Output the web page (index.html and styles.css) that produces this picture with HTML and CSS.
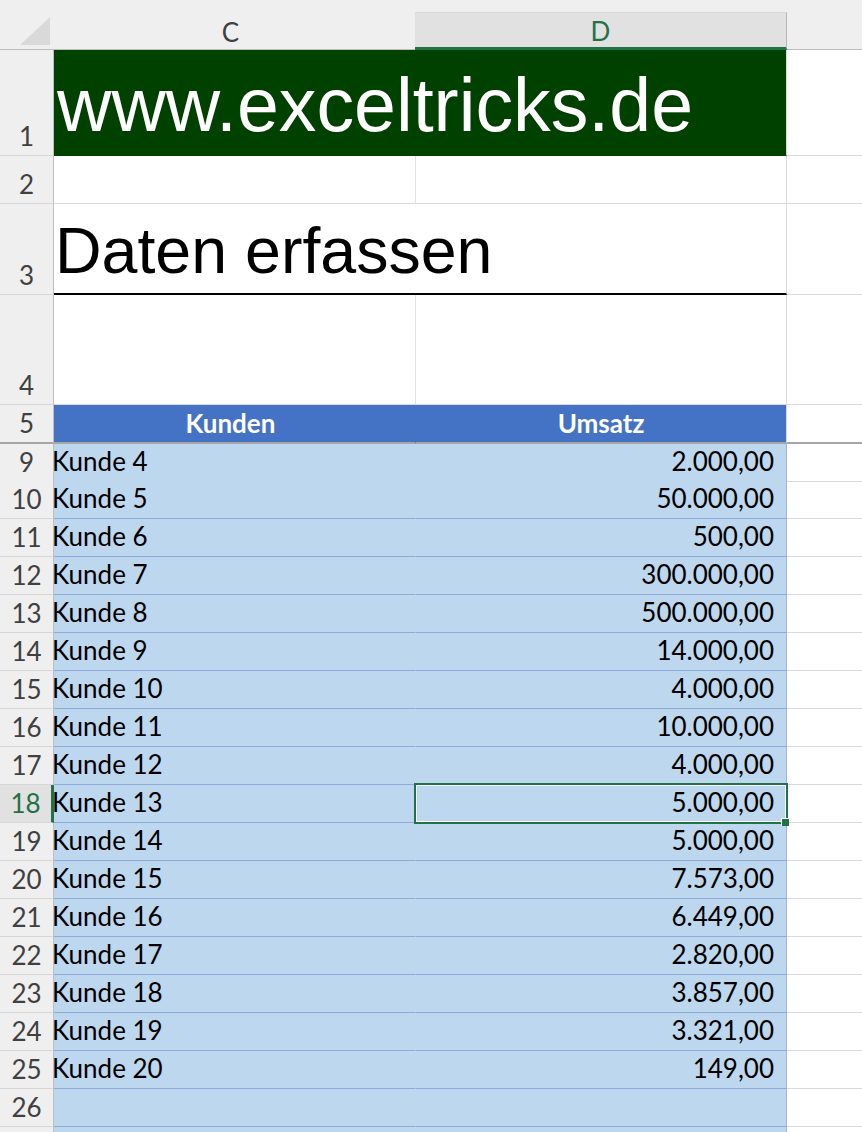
FILE: index.html
```html
<!DOCTYPE html>
<html lang="de">
<head>
<meta charset="utf-8">
<title>exceltricks</title>
<link rel="stylesheet" href="styles.css">
</head>
<body>
<div class="sheet">
  <div class="colheads">
    <div class="corner"><svg width="54" height="37" viewBox="0 0 54 37"><polygon points="20,33 50,33 50,5" fill="#d9d9d9"/></svg></div>
    <div class="colhead">C</div>
    <div class="colhead active">D</div>
    <div class="colhead rest"></div>
  </div>

  <div class="row r1">
    <div class="rh bottom"><span>1</span></div>
    <div class="cell merged brand">www.exceltricks.de</div>
    <div class="cell e"></div>
  </div>
  <div class="row r2">
    <div class="rh bottom"><span>2</span></div>
    <div class="cell c"></div>
    <div class="cell d"></div>
    <div class="cell e"></div>
  </div>
  <div class="row r3">
    <div class="rh bottom"><span>3</span></div>
    <div class="cell merged title">Daten erfassen</div>
    <div class="cell e"></div>
  </div>
  <div class="row r4">
    <div class="rh bottom"><span>4</span></div>
    <div class="cell c"></div>
    <div class="cell d"></div>
    <div class="cell e"></div>
  </div>
  <div class="row r5">
    <div class="rh"><span>5</span></div>
    <div class="cell th thc">Kunden</div>
    <div class="cell th">Umsatz</div>
    <div class="cell e"></div>
  </div>

  <div class="row data first"><div class="rh"><span>9</span></div><div class="cell tc">Kunde 4</div><div class="cell td">2.000,00</div><div class="cell e"></div></div>
  <div class="row data"><div class="rh"><span>10</span></div><div class="cell tc">Kunde 5</div><div class="cell td">50.000,00</div><div class="cell e"></div></div>
  <div class="row data"><div class="rh"><span>11</span></div><div class="cell tc">Kunde 6</div><div class="cell td">500,00</div><div class="cell e"></div></div>
  <div class="row data"><div class="rh"><span>12</span></div><div class="cell tc">Kunde 7</div><div class="cell td">300.000,00</div><div class="cell e"></div></div>
  <div class="row data"><div class="rh"><span>13</span></div><div class="cell tc">Kunde 8</div><div class="cell td">500.000,00</div><div class="cell e"></div></div>
  <div class="row data"><div class="rh"><span>14</span></div><div class="cell tc">Kunde 9</div><div class="cell td">14.000,00</div><div class="cell e"></div></div>
  <div class="row data"><div class="rh"><span>15</span></div><div class="cell tc">Kunde 10</div><div class="cell td">4.000,00</div><div class="cell e"></div></div>
  <div class="row data"><div class="rh"><span>16</span></div><div class="cell tc">Kunde 11</div><div class="cell td">10.000,00</div><div class="cell e"></div></div>
  <div class="row data"><div class="rh"><span>17</span></div><div class="cell tc">Kunde 12</div><div class="cell td">4.000,00</div><div class="cell e"></div></div>
  <div class="row data"><div class="rh sel"><span>18</span></div><div class="cell tc">Kunde 13</div><div class="cell td">5.000,00</div><div class="cell e"></div></div>
  <div class="row data"><div class="rh"><span>19</span></div><div class="cell tc">Kunde 14</div><div class="cell td">5.000,00</div><div class="cell e"></div></div>
  <div class="row data"><div class="rh"><span>20</span></div><div class="cell tc">Kunde 15</div><div class="cell td">7.573,00</div><div class="cell e"></div></div>
  <div class="row data"><div class="rh"><span>21</span></div><div class="cell tc">Kunde 16</div><div class="cell td">6.449,00</div><div class="cell e"></div></div>
  <div class="row data"><div class="rh"><span>22</span></div><div class="cell tc">Kunde 17</div><div class="cell td">2.820,00</div><div class="cell e"></div></div>
  <div class="row data"><div class="rh"><span>23</span></div><div class="cell tc">Kunde 18</div><div class="cell td">3.857,00</div><div class="cell e"></div></div>
  <div class="row data"><div class="rh"><span>24</span></div><div class="cell tc">Kunde 19</div><div class="cell td">3.321,00</div><div class="cell e"></div></div>
  <div class="row data"><div class="rh"><span>25</span></div><div class="cell tc">Kunde 20</div><div class="cell td">149,00</div><div class="cell e"></div></div>
  <div class="row data"><div class="rh"><span>26</span></div><div class="cell tc"></div><div class="cell td"></div><div class="cell e"></div></div>
  <div class="row data"><div class="rh"></div><div class="cell tc"></div><div class="cell td"></div><div class="cell e"></div></div>

  <div class="selection"></div>
  <div class="handle"></div>
</div>
</body>
</html>
```
FILE: styles.css
```css
html, body {
  margin: 0;
  padding: 0;
  background: #ffffff;
  overflow: hidden;
}
body {
  width: 862px;
  height: 1132px;
  font-family: Lato, "Open Sans", sans-serif;
}
.sheet {
  position: relative;
  width: 862px;
  height: 1132px;
  overflow: hidden;
}

/* column headers */
.colheads {
  display: grid;
  grid-template-columns: 54px 361px 372px 1fr;
  padding-top: 12px;
  background: #efefef;
}
.colheads > div {
  box-sizing: border-box;
  height: 38px;
  border-bottom: 1px solid #bdbdbd;
}
.corner {
  line-height: 0;
}
.corner svg {
  display: block;
}
.colhead {
  display: flex;
  align-items: center;
  justify-content: center;
  padding: 2px 8px 0 0;
  font-size: 26px;
  color: #404040;
}
.colhead.active {
  padding-right: 0;
  background: #e1e1e1;
  color: #217346;
  border-top: 1px solid #d8d8d8;
  border-right: 1px solid #b8b8b8;
  border-bottom: 3px solid #217346;
}
.colhead.rest {
  background: #efefef;
}

/* rows */
.row {
  display: grid;
  grid-template-columns: 54px 362px 371px 1fr;
}
.row > div {
  box-sizing: border-box;
}
.r1 { height: 106px; }
.r2 { height: 48px; }
.r3 { height: 91px; }
.r4 { height: 110px; }
.r5 { height: 39px; }
.data { height: 38px; }
.data.first { height: 37px; }

.rh {
  background: #efefef;
  border-right: 1px solid #bfbfbf;
  border-bottom: 1px solid #d6d6d6;
  display: flex;
  align-items: center;
  justify-content: center;
  font-size: 26px;
  color: #404040;
}
.rh span {
  line-height: 37px;
}
.rh.bottom {
  align-items: flex-end;
}
.rh.sel {
  background: #e1e1e1;
  color: #217346;
  border-right: 3px solid #217346;
}
.r5 .rh {
  border-bottom: 2px solid #a6a6a6;
}

.cell {
  border-bottom: 1px solid #dadada;
}
.cell.c {
  border-right: 1px solid #e1e1e1;
}
.cell.d {
  border-right: 1px solid #dadada;
}
.cell.merged {
  grid-column: span 2;
  border-right: 1px solid #dadada;
  font-family: "Liberation Sans", Arial, sans-serif;
  display: flex;
  align-items: flex-end;
  white-space: nowrap;
}
.brand {
  background: #004100;
  border-bottom-color: #004100;
  color: #ffffff;
  font-size: 75.3px;
  padding: 0 0 7px 3px;
}
.title {
  color: #000000;
  font-size: 64.5px;
  border-bottom: 2px solid #000000;
  padding: 0 0 5px 1px;
}
.r3 .e {
  border-bottom: 1px solid #dadada;
}

.th {
  background: #4472c4;
  color: #ffffff;
  font-weight: 700;
  font-size: 26px;
  display: flex;
  align-items: center;
  justify-content: center;
  padding-bottom: 1px;
  border-bottom: 2px solid #a6a6a6;
  border-right: 1px solid #d9d9d9;
}
.th.thc {
  border-right: 1px solid #4472c4;
  padding-right: 8px;
}
.r5 .e {
  border-bottom: 2px solid #a6a6a6;
}

.tc, .td {
  background: #bdd7ee;
  border-bottom: 1px solid #8ea9db;
  font-size: 26px;
  color: #000000;
  display: flex;
  align-items: center;
  padding-bottom: 3px;
  white-space: nowrap;
}
.tc {
  border-right: 1px solid #bdd7ee;
  text-indent: -2px;
}
.td {
  justify-content: flex-end;
  padding-right: 12px;
  border-right: 1px solid #9bb3de;
}

/* selection */
.selection {
  position: absolute;
  left: 414px;
  top: 783px;
  width: 374px;
  height: 41px;
  box-sizing: border-box;
  border: 2px solid #217346;
  box-shadow: inset 0 0 0 1px #ffffff;
}
.handle {
  position: absolute;
  left: 781px;
  top: 818px;
  width: 8px;
  height: 8px;
  box-sizing: border-box;
  background: #217346;
  border-top: 1px solid #ffffff;
  border-left: 1px solid #ffffff;
}
```
